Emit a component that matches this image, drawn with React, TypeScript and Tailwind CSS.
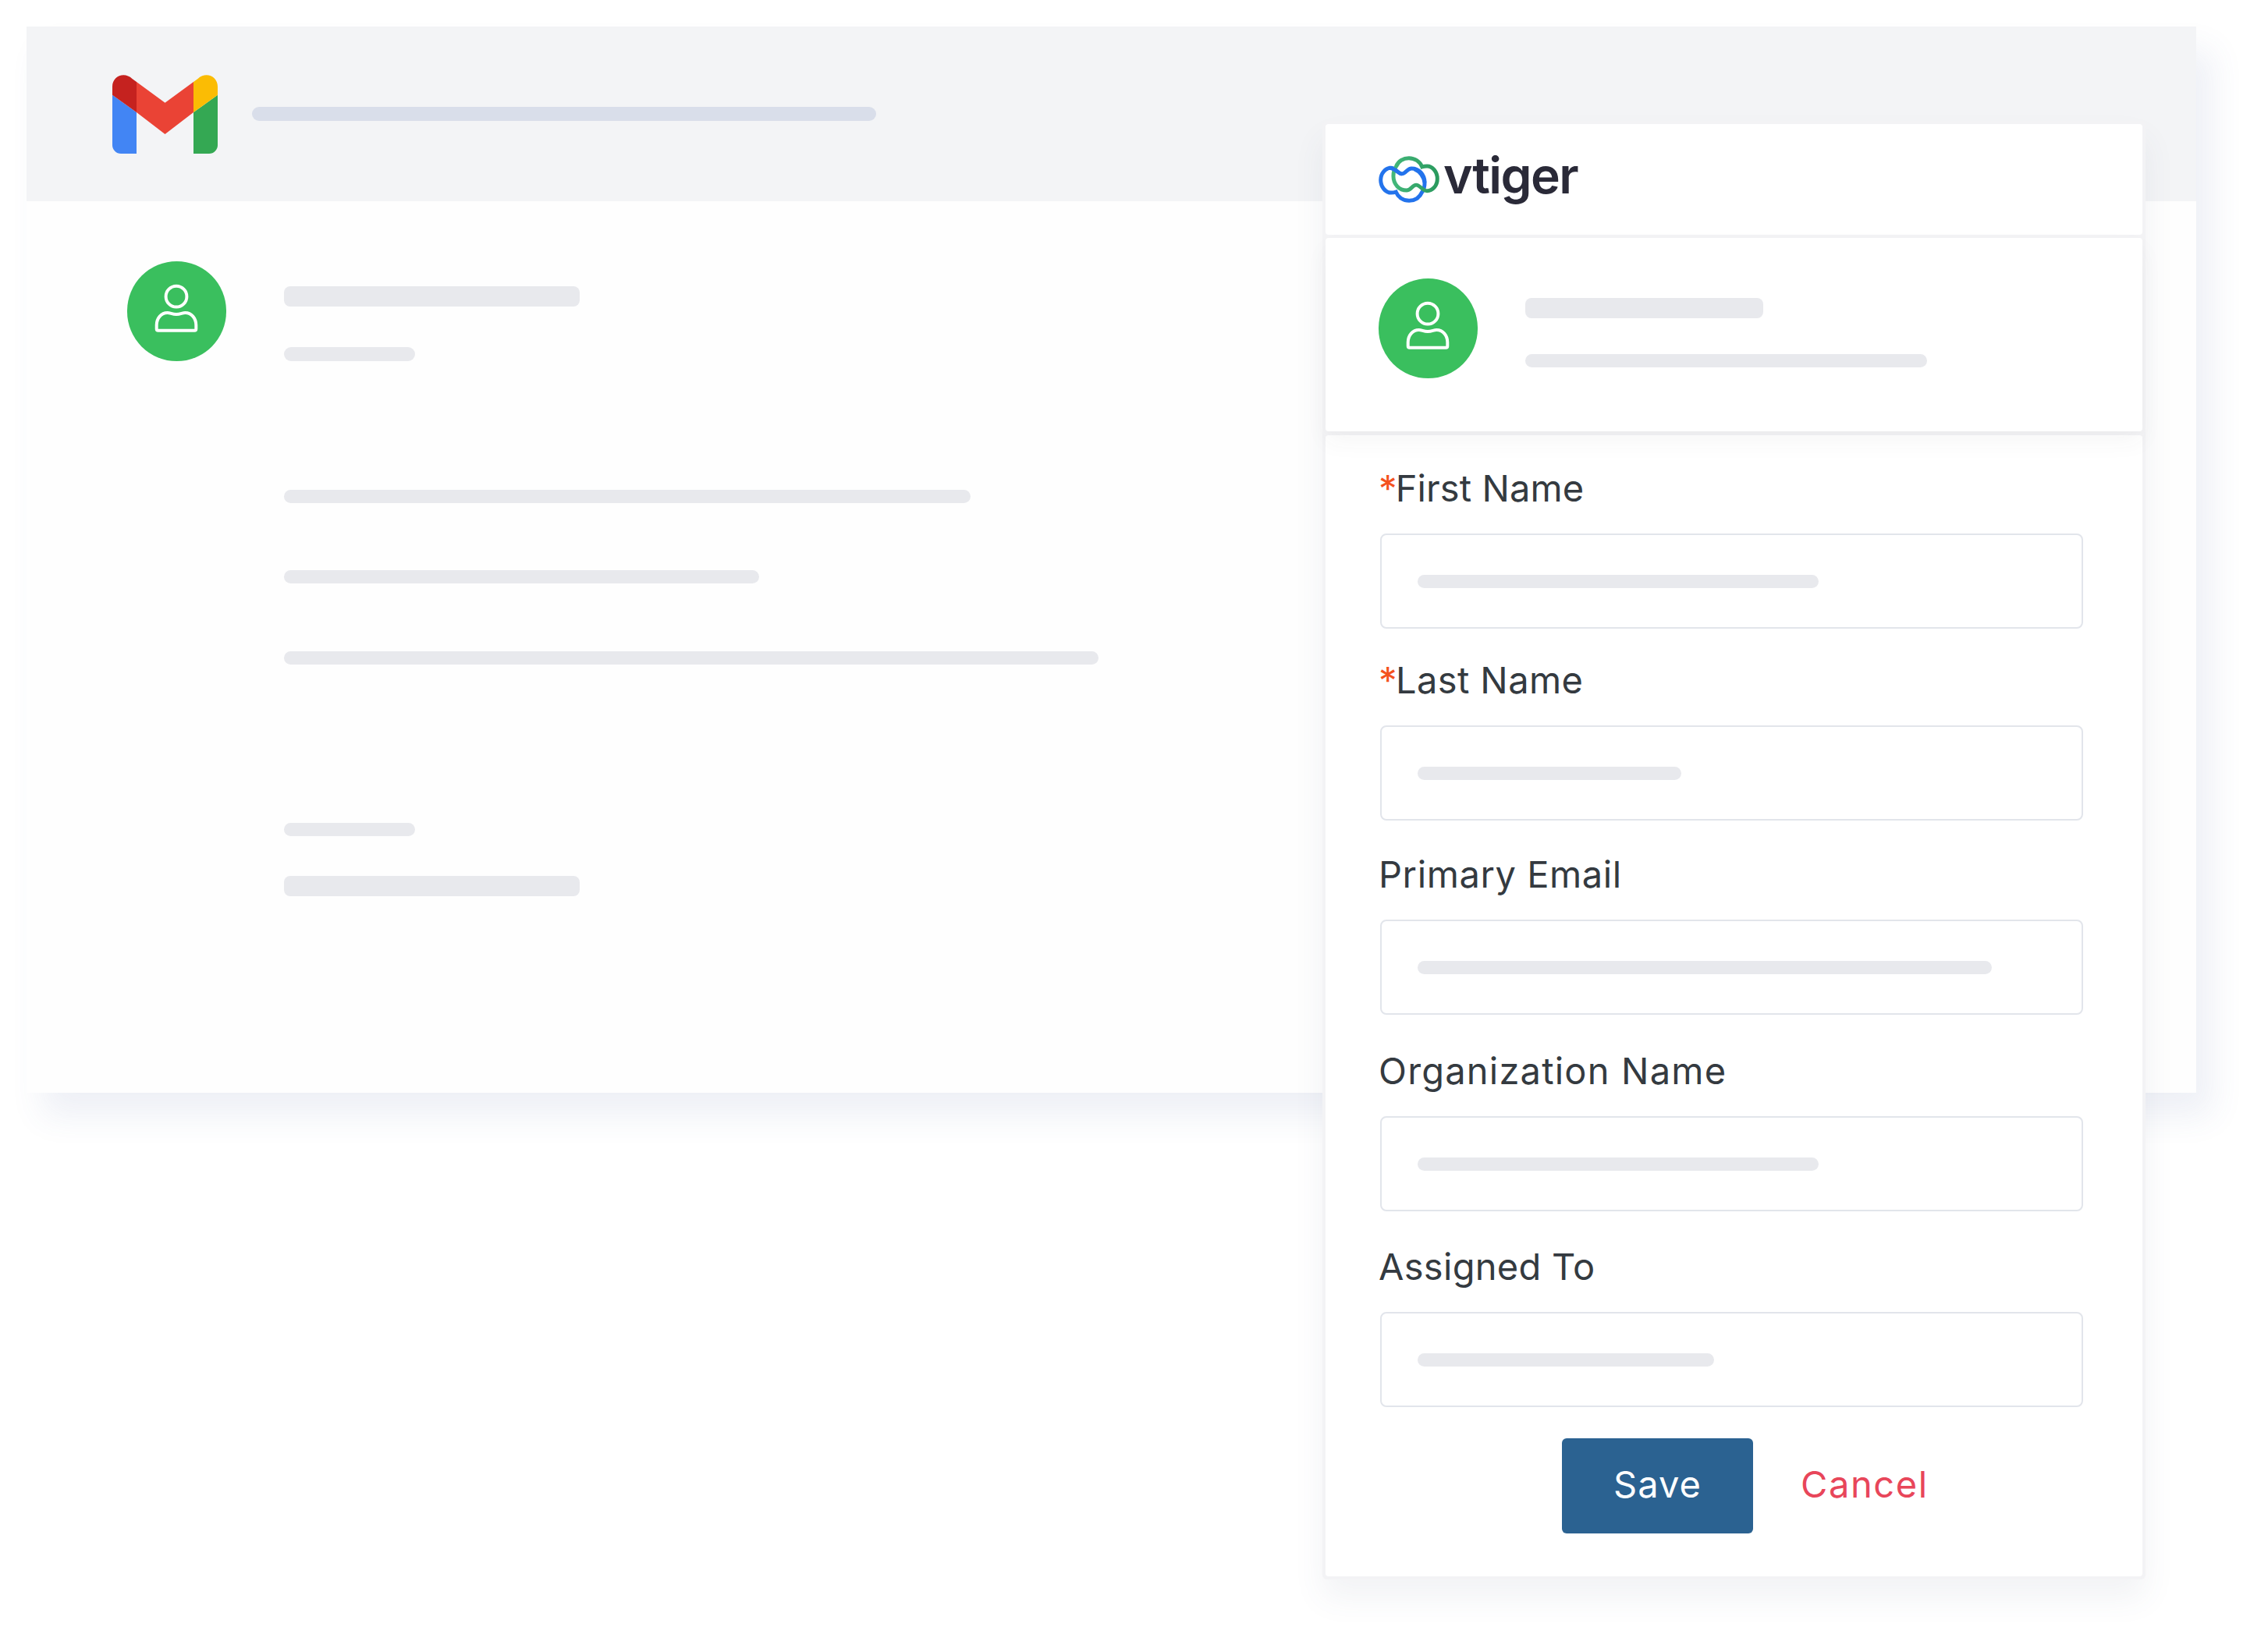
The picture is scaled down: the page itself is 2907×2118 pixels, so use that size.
import React from "react";

const font = { fontFamily: '"Inter", "Liberation Sans", sans-serif' };

function Person() {
  return (
    <div className="w-[127px] h-[128px] rounded-full bg-[#3abf5e] shrink-0">
      <svg viewBox="0 0 128 128" className="w-full h-full" fill="none" stroke="#ffffff" strokeWidth="4">
        <circle cx="63.5" cy="45" r="13.5" />
        <path d="M40 89a2 2 0 0 1-2-2v-5c0-9 6-16 14-16c4 0 6 2 11.500 2s7.500-2 11.500-2c8 0 14 7 14 16v5a2 2 0 0 1-2 2z" />
      </svg>
    </div>
  );
}

function GmailLogo() {
  return (
    <svg viewBox="0 0 135 102" className="w-[135px] h-[102px] shrink-0">
      <path d="M0 26.700 L31 49 V102 H11 A11 11 0 0 1 0 91 Z" fill="#4285f4" />
      <path d="M135 26.700 L104 49 V102 H124 A11 11 0 0 0 135 91 Z" fill="#34a853" />
      <path d="M31 10 L67.500 36.700 L104 10 V49 L67.500 77 L31 49 Z" fill="#ea4335" />
      <path d="M0 26.700 V16 C0 3 15 -4 25.500 6 L31 10 V49 Z" fill="#c5221f" />
      <path d="M135 26.700 V16 C135 3 120 -4 109.500 6 L104 10 V49 Z" fill="#fbbc04" />
    </svg>
  );
}

function VtigerMark() {
  const cloud =
    "M68 40C76 20 96 8 117 8C140 8 160 22 168 42C174 40 180 39 187 39C209 39 227 62 227 88C227 114 209 135 187 135C170 135 160 112 145 112C130 112 125 133 108 133C80 133 57 110 57 78C57 62 60 50 68 40Z";
  return (
    <svg viewBox="0 0 235 181" className="w-[78px] h-[60px] shrink-0" fill="none" strokeWidth="15">
      <defs>
        <linearGradient id="vg" x1="0" y1="0" x2="1" y2="0">
          <stop offset="0" stopColor="#43b77a" />
          <stop offset="1" stopColor="#2a9a5e" />
        </linearGradient>
      </defs>
      <path d={cloud} stroke="#2373ec" transform="rotate(180 117.500 90.500)" />
      <path d={cloud} stroke="url(#vg)" />
      <g transform="rotate(180 117.500 90.500)" stroke="#2373ec">
        <path d="M195 135C170 135 160 112 145 112" />
        <path d="M57 78C60 100 75 122 97 131" />
      </g>
    </svg>
  );
}

const fields = [
  { label: "First Name", req: true, mt: "mt-[38px]", bar: "w-[514px]", track: "tracking-[0.1px]" },
  { label: "Last Name", req: true, mt: "mt-[36px]", bar: "w-[338px]", track: "tracking-[0.4px]" },
  { label: "Primary Email", req: false, mt: "mt-[39px]", bar: "w-[736px]", track: "tracking-[0.6px]" },
  { label: "Organization Name", req: false, mt: "mt-[42px]", bar: "w-[514px]", track: "tracking-[1.2px]" },
  { label: "Assigned To", req: false, mt: "mt-[41px]", bar: "w-[380px]", track: "tracking-[0.3px]" },
];

export default function App() {
  return (
    <div className="relative w-[2907px] h-[2118px] bg-white overflow-hidden pt-[34px] pl-[34px]" style={font}>
      <div className="w-[2781px] h-[1367px] bg-[#fefefe] shadow-[20px_30px_40px_rgba(70,85,155,0.09)]">
        <div className="h-[224px] bg-[#f3f4f6] flex items-center pl-[110px]">
          <GmailLogo />
          <div className="ml-[44px] w-[800px] h-[18px] rounded-full bg-[#d9deea]" />
        </div>
        <div className="pl-[129px] pt-[77px] flex">
          <Person />
          <div className="ml-[74px] pt-[32px]">
            <div className="w-[379px] h-[26px] rounded-[8px] bg-[#e8e9ed]" />
            <div className="mt-[52px] w-[168px] h-[18px] rounded-full bg-[#e8e9ed]" />
            <div className="mt-[165px] w-[880px] h-[17px] rounded-full bg-[#e8e9ed]" />
            <div className="mt-[86px] w-[609px] h-[17px] rounded-full bg-[#e8e9ed]" />
            <div className="mt-[87px] w-[1044px] h-[17px] rounded-full bg-[#e8e9ed]" />
            <div className="mt-[203px] w-[168px] h-[17px] rounded-full bg-[#e8e9ed]" />
            <div className="mt-[51px] w-[379px] h-[26px] rounded-[8px] bg-[#e8e9ed]" />
          </div>
        </div>
      </div>

      <div className="absolute left-[1695px] top-[155px] w-[1055px] h-[1870px] bg-[#f3f3f5] rounded-[6px] p-[4px] flex flex-col shadow-[0_24px_40px_rgba(70,80,110,0.07)]">
        <div className="h-[142px] bg-white rounded-[4px] flex items-center pl-[68px]">
          <VtigerMark />
          <span className="ml-[5px] text-[64px] leading-none font-semibold tracking-[-1.5px] text-[#2a2a38] -mt-[10px]">vtiger</span>
        </div>
        <div className="relative z-10 mt-[4px] h-[248px] bg-white rounded-[4px] flex items-start pt-[52px] pl-[68px] shadow-[0_14px_30px_rgba(60,70,70,0.045)]">
          <Person />
          <div className="ml-[61px] pt-[25px]">
            <div className="w-[305px] h-[26px] rounded-[8px] bg-[#e8e9ed]" />
            <div className="mt-[46px] w-[515px] h-[17px] rounded-full bg-[#e8e9ed]" />
          </div>
        </div>
        <div className="mt-[5px] flex-1 bg-white rounded-[4px] pl-[70px]">
          {fields.map((f) => (
            <div key={f.label} className={f.mt}>
              <div className={`h-[60px] leading-[60px] -ml-[2px] text-[47px] ${f.track} text-[#343a40] whitespace-nowrap`}>
                {f.req && <span className="text-[#f4511e] -mr-[2px]">*</span>}
                {f.label}
              </div>
              <div className="mt-[28px] w-[901px] h-[122px] bg-white border-2 border-[#e2e5eb] rounded-[8px] flex items-center pl-[46px]">
                <div className={`${f.bar} h-[17px] rounded-full bg-[#e8e9ed]`} />
              </div>
            </div>
          ))}
          <div className="mt-[40px] flex items-center pl-[233px]">
            <button className="w-[245px] h-[122px] rounded-[6px] bg-[#2b6291] text-white text-[47px] tracking-[1px] pb-[3px]">Save</button>
            <span className="ml-[61px] text-[47px] tracking-[1.6px] text-[#e8465a] -mt-[3px]">Cancel</span>
          </div>
        </div>
      </div>
    </div>
  );
}
